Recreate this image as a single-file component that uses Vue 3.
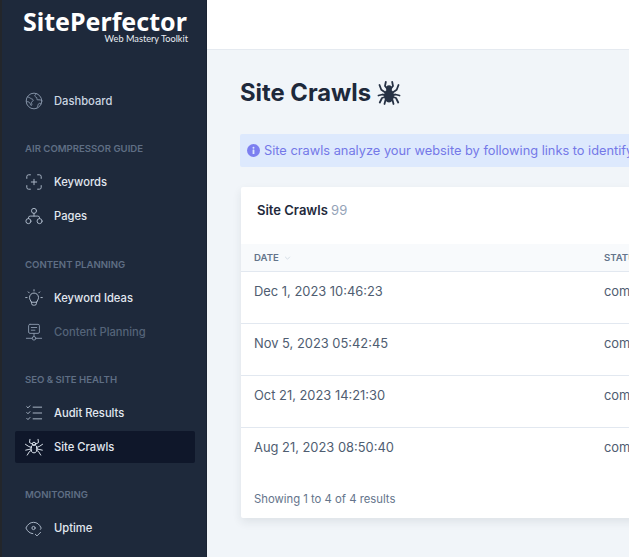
<script setup>
const sections = [
  { label: 'Air Compressor Guide', items: [{ name: 'Keywords', icon: 'scan' }, { name: 'Pages', icon: 'tree' }] },
  { label: 'Content Planning', items: [{ name: 'Keyword Ideas', icon: 'bulb' }, { name: 'Content Planning', icon: 'board', dim: true }] },
  { label: 'SEO & Site Health', items: [{ name: 'Audit Results', icon: 'checks' }, { name: 'Site Crawls', icon: 'spider', active: true }] },
  { label: 'Monitoring', items: [{ name: 'Uptime', icon: 'eye' }] }
]
const rows = ['Dec 1, 2023 10:46:23', 'Nov 5, 2023 05:42:45', 'Oct 21, 2023 14:21:30', 'Aug 21, 2023 08:50:40']
</script>

<template>
  <div class="app">
    <div class="edge"></div>
    <aside class="sidebar">
      <div class="logo">
        <div class="logo-name">SitePerfector</div>
        <div class="logo-sub">Web Mastery Toolkit</div>
      </div>
      <nav class="nav">
        <a class="item first">
          <svg class="ico" viewBox="0 0 20 20"><circle cx="10" cy="10" r="8.7"/><path d="M3 5.5c2 .3 2.6 1.3 3.6 1.8 1 .6 2.6.7 2.6 2 0 1-1.6 1-2 2-.3 1 .8 2.2.3 3.2-.3.6-.9.6-1.2 0-.5-1.200-.7-2.700-2-3.300-1-.5-2.300-.4-2.800-1M12.500 2c-.6 1-1.800 1.500-1.600 2.600.2 1 1.700.8 2.200 1.700.4.800-.4 1.600.3 2.200 1 .7 3-.6 5.200 1M18 13c-1-.6-2.300-.7-3 .2-.7 1-.6 2.500-1.500 3.600"/></svg>
          <span>Dashboard</span>
        </a>
        <section v-for="s in sections" :key="s.label" class="group">
          <h3 class="group-label">{{ s.label }}</h3>
          <a v-for="it in s.items" :key="it.name" class="item" :class="{ dim: it.dim, active: it.active }">
            <svg class="ico" viewBox="0 0 20 20">
              <path v-if="it.icon === 'scan'" d="M2 6V4a2 2 0 0 1 2-2h2M14 2h2a2 2 0 0 1 2 2v2M18 14v2a2 2 0 0 1-2 2h-2M6 18H4a2 2 0 0 1-2-2v-2M7 10h6M10 7v6"/>
              <template v-else-if="it.icon === 'tree'">
                <circle cx="10" cy="4.300" r="2.800"/><circle cx="3.800" cy="15.700" r="2.800"/><circle cx="16.200" cy="15.700" r="2.800"/>
                <path d="M10 7.100v3M3.800 12.900v-.8a2 2 0 0 1 2-2h8.400a2 2 0 0 1 2 2v.8"/>
              </template>
              <template v-else-if="it.icon === 'bulb'">
                <path d="M6.800 14.300c-.3-1.700-1.800-2.500-1.800-4.800a5 5 0 0 1 10 0c0 2.300-1.500 3.100-1.800 4.800zM7.300 14.300v1.700a2 2 0 0 0 2 2h1.400a2 2 0 0 0 2-2v-1.700M.8 9.500h1.500M17.700 9.500h1.500M10 .8v1.400M3.600 3.200l1.100 1.100M16.400 3.200l-1.100 1.100"/>
              </template>
              <template v-else-if="it.icon === 'board'">
                <path d="M5.500 1.500h9a1.500 1.500 0 0 1 1.500 1.500v7a1.500 1.500 0 0 1-1.500 1.500h-9A1.500 1.500 0 0 1 4 10V3a1.500 1.500 0 0 1 1.500-1.500zM7 5h6M7 8h4M10 11.500v3.500M1.500 17h6.500M12 17h6.500"/><circle cx="10" cy="17" r="2"/>
              </template>
              <path v-else-if="it.icon === 'checks'" d="M9 3.500h9.500M9 10h9.500M9 16.500h9.500M2 3l1.300 1.300L5.500 2M2 9.500l1.300 1.300 2.200-2.300M2 16l1.300 1.300 2.200-2.300"/>
              <template v-else-if="it.icon === 'spider'">
                <ellipse cx="10" cy="12" rx="3.300" ry="4.500"/><circle cx="10" cy="6.500" r="1.800"/>
                <path d="M5.500 1.500 5 5l3.500 2M14.500 1.500 15 5l-3.500 2M.5 7l3.800 2.500 3 1M19.500 7l-3.800 2.500-3 1M.8 13.500l3.500-.8 2.500-.5M19.200 13.500l-3.500-.8-2.500-.5M2.500 19l2.500-4 2.500-1.500M17.500 19 15 15l-2.500-1.500"/>
              </template>
              <template v-else-if="it.icon === 'eye'">
                <circle cx="9.500" cy="10" r="1.800"/>
                <path d="M8.700 16.300C5.300 16 2.800 13.800 1 10c2-4.200 4.800-6.300 8.500-6.300S16 5.800 18 10c-.3.600-.5 1.100-.8 1.500M11.500 17l1.800 1.800 4-4"/>
              </template>
            </svg>
            <span>{{ it.name }}</span>
          </a>
        </section>
      </nav>
    </aside>
    <div class="main">
      <header class="topbar"></header>
      <div class="content">
        <h1 class="title">Site Crawls
          <svg class="bug" viewBox="0 0 24 24">
            <ellipse cx="12" cy="14.800" rx="5" ry="6.700" fill="#273245"/>
            <circle cx="12" cy="7.200" r="3" fill="#273245"/>
            <path d="M8.800 1l-.8 4 2.800 3.500M15.200 1l.8 4-2.800 3.500M2.500 4l1.800 4.800 4.700 3.200M21.500 4l-1.800 4.800-4.700 3.200M1.500 14.500l4-1 3.500.8M22.500 14.500l-4-1-3.500.8M2.800 21.500l2.200-4.500 4-1.500M21.200 21.500 19 17l-4-1.500M7.500 23l1-4 2-2M16.500 23l-1-4-2-2" fill="none" stroke="#273245" stroke-width="1.800" stroke-linecap="round" stroke-linejoin="round"/>
          </svg>
        </h1>
        <div class="notice">
          <svg class="info" viewBox="0 0 20 20"><circle cx="10" cy="10" r="10" fill="#7c7ff0"/><circle cx="10" cy="5.800" r="1.500" fill="#dbe7fd"/><rect x="8.600" y="8.500" width="2.800" height="7" rx=".6" fill="#dbe7fd"/></svg>
          <span>Site crawls analyze your website by following links to identify issues and opportunities.</span>
        </div>
        <div class="card">
          <div class="card-head">Site Crawls <span class="count">99</span></div>
          <div class="row head">
            <div class="date-col">Date
              <svg class="sort" viewBox="0 0 8 5"><path d="M1 1l3 3 3-3"/></svg>
            </div>
            <div>Status</div>
          </div>
          <div class="rows">
            <div v-for="r in rows" :key="r" class="row body">
              <div class="date-col">{{ r }}</div>
              <div>completed</div>
            </div>
          </div>
          <div class="foot">Showing 1 to 4 of 4 results</div>
        </div>
      </div>
    </div>
  </div>
</template>

<style>
html, body { margin: 0; background: #f1f5f9; }
</style>

<style scoped>
.app {
  display: flex;
  width: 629px;
  height: 557px;
  overflow: hidden;
  background: #f1f5f9;
  font-family: Inter, "Liberation Sans", sans-serif;
}
.edge { flex: 0 0 2px; background: #23262b; }
.sidebar {
  flex: 0 0 205px;
  box-sizing: border-box;
  background: #1e293b;
  border-right: 1px solid #1a2333;
  padding: 0 11px 0 13px;
  overflow: hidden;
}
.logo { height: 85px; width: 165px; margin-left: 8px; color: #fff; }
.logo-name {
  padding-top: 10px;
  font-family: "Noto Sans", sans-serif;
  font-weight: 700;
  font-size: 25px;
  line-height: 22px;
  white-space: nowrap;
}
.logo-sub {
  margin-top: 2px;
  text-align: right;
  font-family: Lato, sans-serif;
  font-size: 9.2px;
  line-height: 10px;
  color: #e8edf3;
}
.nav { display: flex; flex-direction: column; }
.group { margin-top: 22.33px; }
.group-label {
  margin: 0 0 9px 10px;
  font-size: 9.6px;
  line-height: 16px;
  font-weight: 600;
  text-transform: uppercase;
  color: #5f6e84;
}
.item {
  display: flex;
  align-items: center;
  gap: 11px;
  height: 32px;
  margin-bottom: 2px;
  padding-left: 10px;
  border-radius: 2px;
  font-size: 11.2px;
  font-weight: 500;
  color: #e2e8f0;
}
.item.first { color: #cbd5e1; }
.item.dim { color: #556479; }
.item.active { background: #0f172a; }
.ico {
  flex: none;
  width: 18px;
  height: 18px;
  fill: none;
  stroke: #aab6c6;
  stroke-width: 1.100;
  stroke-linecap: round;
  stroke-linejoin: round;
}
.item.first .ico { stroke: #8492a6; }
.item.dim .ico { stroke: #8492a6; }
.item.active .ico { stroke: #dbe3ec; }
.main { flex: 1; min-width: 0; display: flex; flex-direction: column; }
.topbar { flex: 0 0 50px; box-sizing: border-box; background: #fff; border-bottom: 1px solid #e5eaf0; }
.content { padding: 0 0 0 33px; }
.title {
  display: flex;
  align-items: center;
  gap: 6px;
  margin: 26px 0 0;
  height: 34px;
  font-size: 23.8px;
  line-height: 34px;
  font-weight: 700;
  color: #1e293b;
  white-space: nowrap;
}
.bug { width: 24px; height: 24px; flex: none; }
.notice {
  display: flex;
  align-items: center;
  gap: 4px;
  width: 700px;
  height: 33px;
  margin-top: 24px;
  padding-left: 7px;
  box-sizing: border-box;
  background: #dde9fd;
  border-radius: 2px;
  font-size: 12.8px;
  line-height: 16px;
  color: #7478e8;
  white-space: nowrap;
}
.info { width: 13px; height: 13px; flex: none; }
.card {
  width: 700px;
  height: 331px;
  margin: 20px 0 0 1px;
  background: #fff;
  border-radius: 2px;
  box-shadow: 0 4px 10px rgba(30, 41, 59, .09);
}
.card-head {
  height: 57px;
  box-sizing: border-box;
  padding: 14px 0 0 16px;
  font-size: 13px;
  line-height: 18px;
  font-weight: 600;
  color: #1e293b;
}
.count { font-weight: 400; color: #94a3b8; }
.row { display: flex; }
.row.head {
  height: 28px;
  box-sizing: border-box;
  align-items: center;
  background: #f8fafc;
  border-bottom: 1px solid #e2e8f0;
  font-size: 9.6px;
  font-weight: 600;
  text-transform: uppercase;
  color: #64748b;
}
.rows { height: 208px; }
.row.body {
  height: 52px;
  box-sizing: border-box;
  padding-top: 10px;
  border-bottom: 1px solid #e2e8f0;
  font-size: 12.9px;
  line-height: 19px;
  color: #4f5d71;
}
.row.body:last-child { border-bottom: 0; }
.date-col { flex: 0 0 363px; padding-left: 13px; box-sizing: border-box; }
.sort { width: 7px; height: 4px; margin-left: 3px; vertical-align: 1px; fill: none; stroke: #cbd5e1; stroke-width: 1; }
.foot { margin-top: 10px; padding-left: 13px; font-size: 11.3px; line-height: 18px; color: #64748b; }
</style>
